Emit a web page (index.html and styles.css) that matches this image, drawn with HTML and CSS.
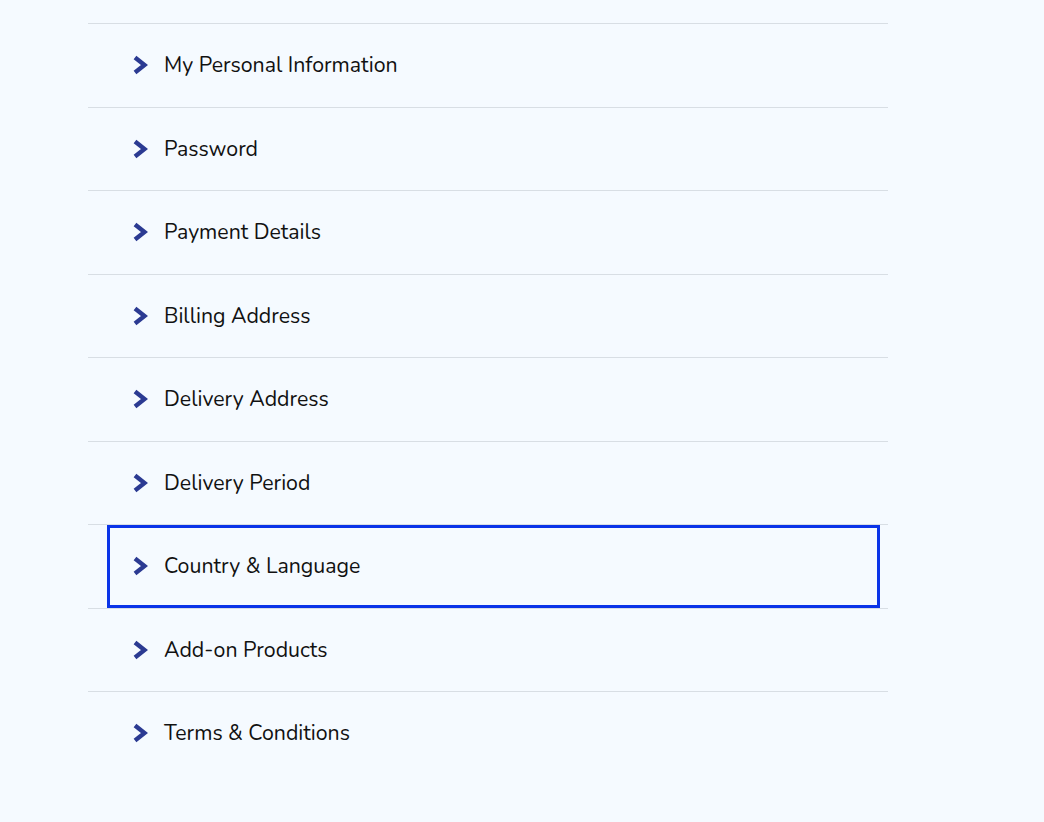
FILE: index.html
```html
<!DOCTYPE html>
<html lang="en">
<head>
<meta charset="utf-8">
<title>Account</title>
<link rel="stylesheet" href="styles.css">
</head>
<body>
<ul class="menu">
  <li class="item"><button class="btn"><svg class="chev" viewBox="0 0 16 20"><polyline points="3,2.5 12.5,10 3,17.5"/></svg><span>My Personal Information</span></button></li>
  <li class="item"><button class="btn"><svg class="chev" viewBox="0 0 16 20"><polyline points="3,2.5 12.5,10 3,17.5"/></svg><span>Password</span></button></li>
  <li class="item"><button class="btn"><svg class="chev" viewBox="0 0 16 20"><polyline points="3,2.5 12.5,10 3,17.5"/></svg><span>Payment Details</span></button></li>
  <li class="item"><button class="btn"><svg class="chev" viewBox="0 0 16 20"><polyline points="3,2.5 12.5,10 3,17.5"/></svg><span>Billing Address</span></button></li>
  <li class="item"><button class="btn"><svg class="chev" viewBox="0 0 16 20"><polyline points="3,2.5 12.5,10 3,17.5"/></svg><span>Delivery Address</span></button></li>
  <li class="item"><button class="btn"><svg class="chev" viewBox="0 0 16 20"><polyline points="3,2.5 12.5,10 3,17.5"/></svg><span>Delivery Period</span></button></li>
  <li class="item"><button class="btn focused"><svg class="chev" viewBox="0 0 16 20"><polyline points="3,2.5 12.5,10 3,17.5"/></svg><span>Country &amp; Language</span></button></li>
  <li class="item"><button class="btn"><svg class="chev" viewBox="0 0 16 20"><polyline points="3,2.5 12.5,10 3,17.5"/></svg><span>Add-on Products</span></button></li>
  <li class="item"><button class="btn"><svg class="chev" viewBox="0 0 16 20"><polyline points="3,2.5 12.5,10 3,17.5"/></svg><span>Terms &amp; Conditions</span></button></li>
</ul>
</body>
</html>
```
FILE: styles.css
```css
html, body {
  margin: 0;
  background: #f5faff;
}
body {
  font-family: "Nunito", "Lato", "Noto Sans", sans-serif;
}
.menu {
  list-style: none;
  margin: 23px 0 0 88px;
  padding: 0;
  width: 800px;
}
.item {
  border-top: 1px solid #d8dee4;
  height: 82.5px;
  display: flex;
}
.btn {
  margin: 0 8px 0 19px;
  flex: 1;
  display: flex;
  align-items: center;
  gap: 16px;
  padding: 0 0 0 25px;
  border: 0;
  background: transparent;
  font: inherit;
  font-size: 21.3px;
  color: #111111;
  text-align: left;
  cursor: pointer;
}
.btn.focused {
  outline: 3px solid #0a34e8;
  outline-offset: -3px;
}
.chev {
  width: 16px;
  height: 20px;
  flex: none;
  fill: none;
  stroke: #2b3a92;
  stroke-width: 4.4;
  stroke-linecap: butt;
  stroke-linejoin: miter;
}
```
